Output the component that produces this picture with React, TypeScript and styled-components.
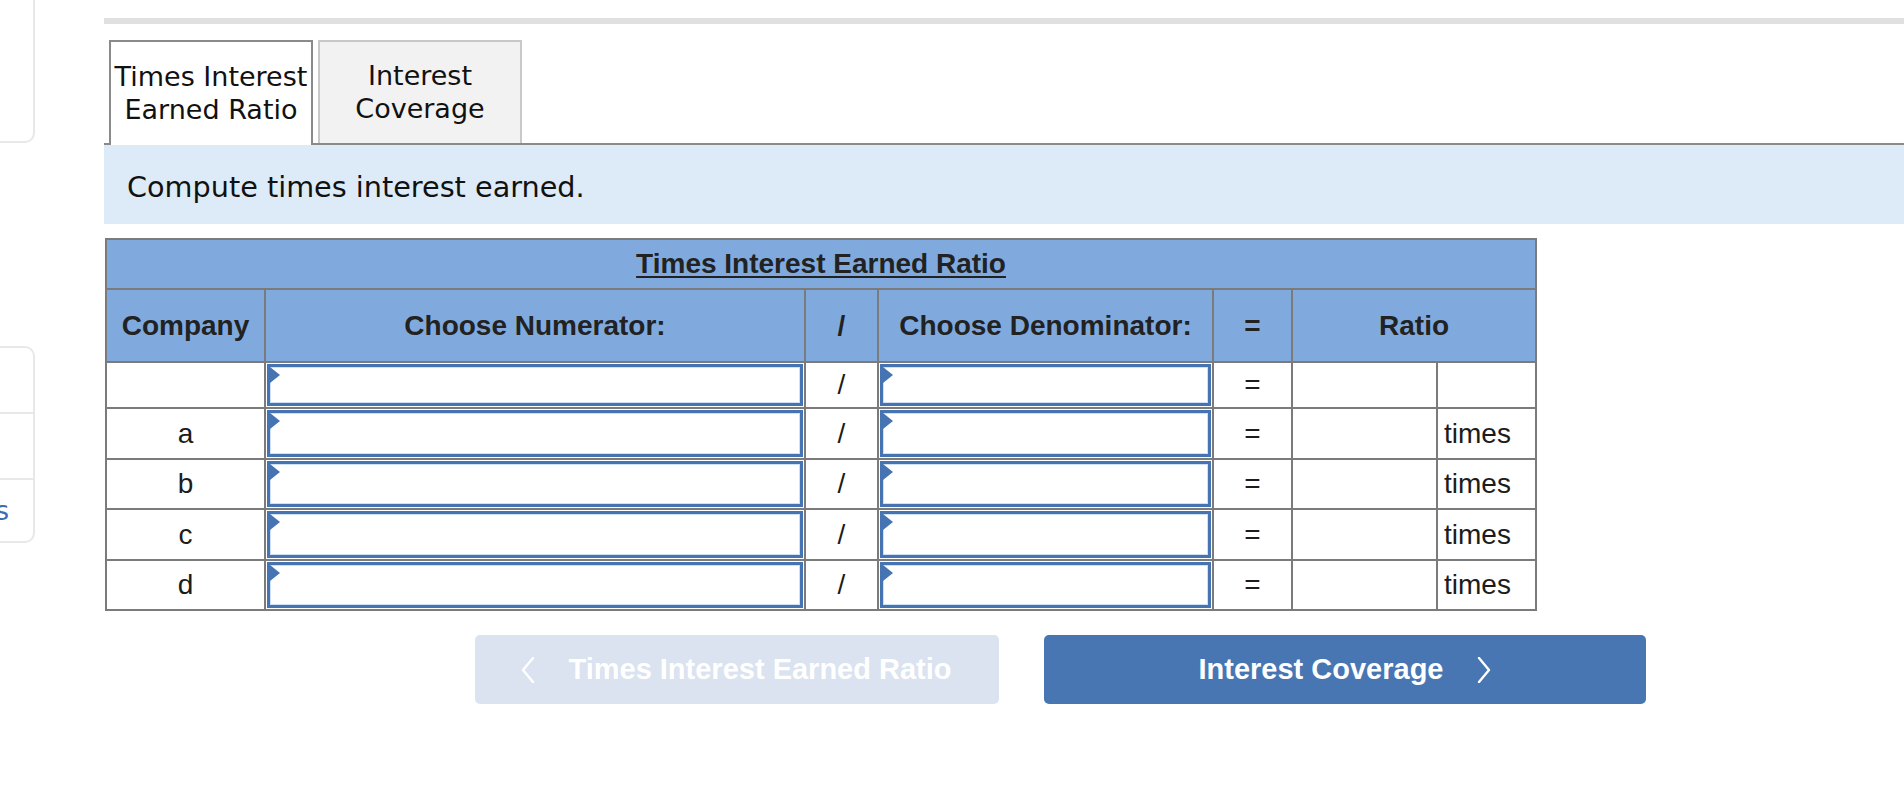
import React from 'react';
import styled, { createGlobalStyle } from 'styled-components';

const GlobalStyle = createGlobalStyle`
  html, body {
    margin: 0;
    padding: 0;
    overflow: hidden;
    background: #fff;
  }
  body {
    font-family: "DejaVu Sans", Verdana, sans-serif;
    color: #111;
  }
`;

const Page = styled.div`
  display: flex;
  align-items: flex-start;
`;

const Sidebar = styled.aside`
  flex: 0 0 300px;
  margin-left: -265px;
  display: flex;
  flex-direction: column;
`;

const SideCard = styled.div<{ $top: number }>`
  margin-top: ${(p) => p.$top}px;
  border: 2px solid #e8e8e8;
  border-radius: 10px;
  background: #fff;
  overflow: hidden;
`;

const SideItem = styled.div<{ $h: number }>`
  height: ${(p) => p.$h}px;
  display: flex;
  align-items: center;
  justify-content: flex-end;
  padding-right: 24px;
  font-size: 26px;
  color: #3b6cb4;
  & + & {
    border-top: 2px solid #e8e8e8;
  }
`;

const Main = styled.main`
  flex: 0 0 1912px;
  margin-left: 69px;
  padding-top: 18px;
`;

const TopRule = styled.div`
  height: 6px;
  background: #e0e0e0;
`;

const TabBar = styled.div`
  margin-top: 16px;
  display: flex;
  align-items: flex-start;
  gap: 5px;
  padding-left: 5px;
  border-bottom: 2px solid #8a8a8a;
`;

const Tab = styled.div<{ $active?: boolean }>`
  box-sizing: border-box;
  width: 204px;
  height: ${(p) => (p.$active ? 105 : 103)}px;
  margin-bottom: ${(p) => (p.$active ? -2 : 0)}px;
  display: flex;
  align-items: center;
  justify-content: center;
  text-align: center;
  font-size: 27px;
  line-height: 33px;
  color: #111;
  background: ${(p) => (p.$active ? '#fff' : '#f2f2f2')};
  border: 2px solid ${(p) => (p.$active ? '#8a8a8a' : '#c8c8c8')};
  border-bottom: ${(p) => (p.$active ? 'none' : '0')};
  padding-bottom: 2px;
`;

const Prompt = styled.div`
  height: 79px;
  display: flex;
  align-items: center;
  padding: 4px 0 0 23px;
  box-sizing: border-box;
  background: #ddebf8;
  font-size: 28.7px;
  color: #111;
`;

const Grid = styled.table`
  margin: 14px 0 0 1px;
  width: 1430px;
  table-layout: fixed;
  border-collapse: collapse;
  font-family: "Liberation Sans", Arial, sans-serif;
  font-size: 28px;
  color: #1c1c1c;
`;

const Row = styled.tr<{ $h: number }>`
  height: ${(p) => p.$h}px;
`;

const Cell = styled.td<{ $align?: 'left' | 'center' }>`
  border: 2px solid #7b7b7b;
  padding: 0;
  text-align: ${(p) => p.$align ?? 'center'};
  padding-left: ${(p) => (p.$align === 'left' ? 6 : 0)}px;
  vertical-align: middle;
`;

const HeadCell = styled.th`
  border: 2px solid #7b7b7b;
  padding: 0;
  background: #80aade;
  font-weight: bold;
  color: #222;
  text-align: center;
  vertical-align: middle;
`;

const Title = styled.span`
  text-decoration: underline;
  text-underline-offset: 3px;
  text-decoration-thickness: 2px;
`;

const PickCell = styled.td`
  border: 2px solid #7b7b7b;
  padding: 1px 1px;
  vertical-align: middle;
`;

const Picker = styled.div<{ $h: number }>`
  position: relative;
  box-sizing: border-box;
  height: ${(p) => p.$h}px;
  border: 3px solid #4674b3;
  box-shadow: inset 0 0 0 1px #cfdff4;
  background: #fff;
  &::before {
    content: '';
    position: absolute;
    left: 0;
    top: 0;
    border-top: 8px solid transparent;
    border-bottom: 8px solid transparent;
    border-left: 10px solid #4674b3;
  }
`;

const NavRow = styled.div`
  margin-top: 24px;
  display: flex;
  justify-content: center;
  gap: 45px;
`;

const NavButton = styled.button<{ $primary?: boolean; $w: number }>`
  width: ${(p) => p.$w}px;
  height: 69px;
  display: flex;
  align-items: center;
  justify-content: center;
  gap: 33px;
  border: none;
  border-radius: 5px;
  background: ${(p) => (p.$primary ? '#4776b3' : '#dae3ef')};
  color: #fff;
  font-family: "Liberation Sans", Arial, sans-serif;
  font-weight: bold;
  font-size: 29px;
  padding: 0;
`;

const Chevron = ({ dir }: { dir: 'left' | 'right' }) => (
  <svg width="14" height="26" viewBox="0 0 14 26" fill="none">
    <polyline
      points={dir === 'left' ? '12,1 2,13 12,25' : '2,1 12,13 2,25'}
      stroke="#fff"
      strokeWidth="2.4"
      strokeLinecap="round"
      strokeLinejoin="round"
    />
  </svg>
);

const companies = ['', 'a', 'b', 'c', 'd'];
const rowHeights = [46, 51, 50, 51, 50];

export default function App() {
  return (
    <>
      <GlobalStyle />
      <Page>
        <Sidebar>
          <SideCard $top={-10}>
            <SideItem $h={149}>&nbsp;</SideItem>
          </SideCard>
          <SideCard $top={203}>
            <SideItem $h={64}>&nbsp;</SideItem>
            <SideItem $h={64}>&nbsp;</SideItem>
            <SideItem $h={61}>References</SideItem>
          </SideCard>
        </Sidebar>
        <Main>
          <TopRule />
          <TabBar>
            <Tab $active>
              Times Interest
              <br />
              Earned Ratio
            </Tab>
            <Tab>
              Interest
              <br />
              Coverage
            </Tab>
          </TabBar>
          <Prompt>Compute times interest earned.</Prompt>
          <Grid>
            <colgroup>
              <col style={{ width: 159 }} />
              <col style={{ width: 540 }} />
              <col style={{ width: 73 }} />
              <col style={{ width: 335 }} />
              <col style={{ width: 79 }} />
              <col style={{ width: 145 }} />
              <col style={{ width: 99 }} />
            </colgroup>
            <thead>
              <Row $h={50}>
                <HeadCell colSpan={7}>
                  <Title>Times Interest Earned Ratio</Title>
                </HeadCell>
              </Row>
              <Row $h={73}>
                <HeadCell>Company</HeadCell>
                <HeadCell>Choose Numerator:</HeadCell>
                <HeadCell>/</HeadCell>
                <HeadCell>Choose Denominator:</HeadCell>
                <HeadCell>=</HeadCell>
                <HeadCell colSpan={2}>Ratio</HeadCell>
              </Row>
            </thead>
            <tbody>
              {companies.map((c, i) => (
                <Row key={i} $h={rowHeights[i]}>
                  <Cell>{c}</Cell>
                  <PickCell>
                    <Picker $h={rowHeights[i] - 4} />
                  </PickCell>
                  <Cell>/</Cell>
                  <PickCell>
                    <Picker $h={rowHeights[i] - 4} />
                  </PickCell>
                  <Cell>=</Cell>
                  <Cell />
                  <Cell $align="left">{i === 0 ? '' : 'times'}</Cell>
                </Row>
              ))}
            </tbody>
          </Grid>
          <NavRow>
            <NavButton $w={524} disabled>
              <Chevron dir="left" />
              <span>Times Interest Earned Ratio</span>
            </NavButton>
            <NavButton $w={602} $primary>
              <span>Interest Coverage</span>
              <Chevron dir="right" />
            </NavButton>
          </NavRow>
        </Main>
      </Page>
    </>
  );
}
